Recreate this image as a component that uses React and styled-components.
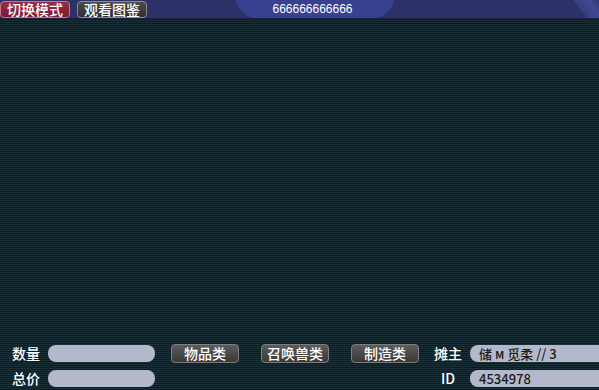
import React from "react";
import styled, { createGlobalStyle } from "styled-components";

const GlobalStyle = createGlobalStyle`
  html, body {
    margin: 0;
    padding: 0;
    background: #14252b;
  }
  body {
    font-family: "Liberation Sans", "Noto Sans CJK SC", sans-serif;
  }
`;

const App = () => {
  return (
    <Screen>
      <GlobalStyle />
      <TopBar>
        <Bulge />
        <Corner />
        <TopButton tone="red">切换模式</TopButton>
        <TopButton tone="gray">观看图鉴</TopButton>
        <Title>666666666666</Title>
      </TopBar>
      <Stage />
      <Panel>
        <Row>
          <Label>数量</Label>
          <Field />
          <Tabs>
            <TabButton>物品类</TabButton>
            <TabButton>召唤兽类</TabButton>
            <TabButton>制造类</TabButton>
          </Tabs>
          <Label wide>摊主</Label>
          <Field grow>储 м 觅柔 // 3</Field>
        </Row>
        <Row>
          <Label>总价</Label>
          <Field />
          <Spacer />
          <Label wide>ID</Label>
          <Field grow>4534978</Field>
        </Row>
      </Panel>
    </Screen>
  );
};

export default App;

const Screen = styled.div`
  width: 599px;
  height: 390px;
  display: flex;
  flex-direction: column;
  overflow: hidden;
  background: repeating-linear-gradient(
    to bottom,
    #1b2f36 0px,
    #1b2f36 1px,
    #0e1c21 1px,
    #0e1c21 2px
  );
`;

const TopBar = styled.div`
  position: relative;
  height: 18px;
  flex: none;
  display: flex;
  align-items: center;
  gap: 7px;
  padding-left: 0;
  background: #2c3169;
  border-bottom: 1px solid #1d2148;
  overflow: hidden;
`;

const Bulge = styled.div`
  position: absolute;
  left: 234px;
  top: -12px;
  width: 162px;
  height: 30px;
  background: #38418f;
  border-radius: 0 0 22px 22px / 0 0 28px 28px;
`;

const Corner = styled.div`
  position: absolute;
  right: -8px;
  top: -4px;
  width: 26px;
  height: 28px;
  background: linear-gradient(to right, #3a4390, #4a54a0 60%, #323a7c);
  transform: skewX(40deg);
  opacity: 0.7;
`;

const TopButton = styled.div`
  position: relative;
  height: 17px;
  width: 70px;
  box-sizing: border-box;
  display: flex;
  align-items: center;
  justify-content: center;
  border-radius: 4px;
  font-family: "Noto Sans CJK SC", sans-serif;
  font-size: 14px;
  font-weight: 500;
  color: #ffffff;
  border: 1px solid ${(p) => (p.tone === "red" ? "#c47a8a" : "#8c8c8c")};
  background: ${(p) =>
    p.tone === "red"
      ? "linear-gradient(to bottom, #9c2c46, #7a1a30)"
      : "linear-gradient(to bottom, #4c4c4c, #2e2e2e)"};
`;

const Title = styled.div`
  position: absolute;
  left: 0;
  right: 0;
  top: 2px;
  text-align: center;
  font-size: 12px;
  color: #ffffff;
  padding-left: 26px;
`;

const Stage = styled.div`
  flex: 1;
`;

const Panel = styled.div`
  display: flex;
  flex-direction: column;
  gap: 7px;
  padding: 0 0 3px 12px;
`;

const Row = styled.div`
  display: flex;
  align-items: center;
  height: 18px;
`;

const Label = styled.div`
  width: ${(p) => (p.wide ? "28px" : "36px")};
  margin-right: ${(p) => (p.wide ? "8px" : "0")};
  text-align: ${(p) => (p.wide ? "center" : "left")};
  font-family: "Noto Sans CJK SC", sans-serif;
  font-size: 14px;
  font-weight: 500;
  color: #ffffff;
  flex: none;
`;

const Field = styled.div`
  width: ${(p) => (p.grow ? "auto" : "107px")};
  flex: ${(p) => (p.grow ? "1 0 auto" : "none")};
  margin-right: ${(p) => (p.grow ? "-20px" : "0")};
  height: 17px;
  border-radius: 8px;
  background: #b3b9ca;
  color: #1a1a1a;
  font-family: "Noto Sans CJK SC", sans-serif;
  font-size: 13px;
  font-weight: 500;
  line-height: 17px;
  padding-left: 9px;
  box-sizing: border-box;
`;

const Tabs = styled.div`
  display: flex;
  gap: 22px;
  margin-left: 16px;
  margin-right: 15px;
`;

const Spacer = styled.div`
  width: 279px;
  flex: none;
`;

const TabButton = styled.div`
  width: 68px;
  height: 19px;
  box-sizing: border-box;
  display: flex;
  align-items: center;
  justify-content: center;
  border-radius: 4px;
  border: 1px solid #7e7e7e;
  background: linear-gradient(to bottom, #5c5c5c, #383838);
  font-family: "Noto Sans CJK SC", sans-serif;
  font-size: 14px;
  font-weight: 500;
  color: #ffffff;
`;
